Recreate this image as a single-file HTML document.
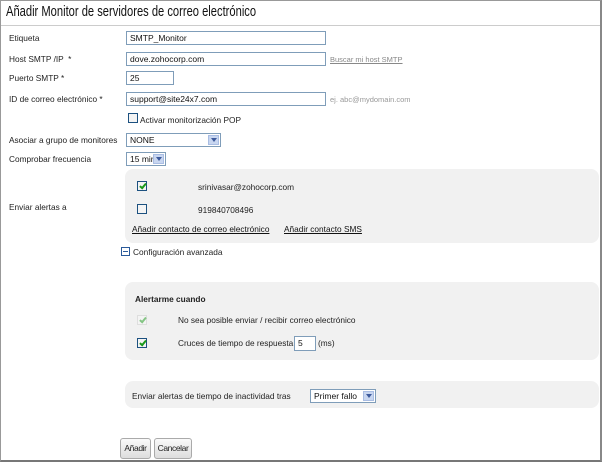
<!DOCTYPE html>
<html><head><meta charset="utf-8"><style>
*{margin:0;padding:0;box-sizing:border-box}
body{width:602px;height:462px;position:relative;background:#fff;font-family:"Liberation Sans",sans-serif;font-size:8.3px;color:#222;overflow:hidden}
.a{position:absolute;white-space:nowrap}
.frame{position:absolute;left:0;top:0;width:602px;height:462px;border-top:1px solid #999;border-left:1px solid #999;border-right:2px solid #888;border-bottom:2px solid #777}
.title{left:6px;top:4px;font-family:"Liberation Sans",sans-serif;font-size:14.5px;color:#111;transform:scaleX(.77);transform-origin:left}
.sep{left:1px;top:25px;width:599px;height:1px;background:#ccc}
.inp{position:absolute;border:1px solid #7f9db9;background:#fff;padding-left:3px;font-size:8.5px;line-height:12px;color:#111}
.sel{position:absolute;border:1px solid #7f9db9;background:#fff;padding-left:3px;font-size:8.5px;line-height:12px;color:#111}
.sel i{position:absolute;right:1px;top:1px;width:11px;height:10px;background:#c8d6f0;border:1px solid #a9bde3}
.sel i:after{content:"";position:absolute;left:2px;top:2px;border-left:3px solid transparent;border-right:3px solid transparent;border-top:4px solid #3d5a9c}
.box{position:absolute;left:125px;width:474px;background:#f1f1f1;border-radius:8px}
.cb{position:absolute;width:10px;height:10px;border:1px solid #1c5180;background:#f4f4f4}
.cb.ck:after{content:"";position:absolute;left:3px;top:0px;width:2px;height:5px;border-right:2px solid #1a9a1a;border-bottom:2px solid #1a9a1a;transform:rotate(40deg)}
.u{text-decoration:underline;color:#111}
.gray{color:#999}
.btn{position:absolute;top:438px;height:21px;border:1px solid #aaa;border-radius:3px;background:linear-gradient(#fafafa,#ddd);font-family:"Liberation Sans",sans-serif;font-size:8.5px;line-height:19px;text-align:center;letter-spacing:-.4px}
</style></head><body>
<div class="frame"></div>
<div class="a title">Añadir Monitor de servidores de correo electrónico</div>
<div class="a sep"></div>

<div class="a" style="left:9px;top:33px">Etiqueta</div>
<div class="inp" style="left:126px;top:31px;width:200px;height:14px">SMTP_Monitor</div>
<div class="a" style="left:9px;top:54px">Host SMTP /IP &nbsp;*</div>
<div class="inp" style="left:126px;top:52px;width:200px;height:14px">dove.zohocorp.com</div>
<div class="a u gray" style="left:330px;top:55px;font-size:7.5px;color:#888">Buscar mi host SMTP</div>
<div class="a" style="left:9px;top:73px">Puerto SMTP *</div>
<div class="inp" style="left:126px;top:71px;width:48px;height:14px">25</div>
<div class="a" style="left:9px;top:94px">ID de correo electrónico *</div>
<div class="inp" style="left:126px;top:92px;width:200px;height:14px">support@site24x7.com</div>
<div class="a gray" style="left:330px;top:95px;font-size:7.5px">ej. abc@mydomain.com</div>
<div class="cb" style="left:128px;top:113px"></div>
<div class="a" style="left:140px;top:115px">Activar monitorización POP</div>
<div class="a" style="left:9px;top:135px">Asociar a grupo de monitores</div>
<div class="sel" style="left:126px;top:133px;width:95px;height:14px">NONE<i></i></div>
<div class="a" style="left:9px;top:154px">Comprobar frecuencia</div>
<div class="sel" style="left:126px;top:152px;width:40px;height:14px">15 min<i></i></div>

<div class="box" style="top:169px;height:74px"></div>
<div class="cb ck" style="left:137px;top:181px"></div>
<div class="a" style="left:198px;top:182px">srinivasar@zohocorp.com</div>
<div class="cb" style="left:137px;top:204px"></div>
<div class="a" style="left:198px;top:205px">919840708496</div>
<div class="a" style="left:9px;top:202px">Enviar alertas a</div>
<div class="a u" style="left:132px;top:224px">Añadir contacto de correo electrónico</div>
<div class="a u" style="left:284px;top:224px">Añadir contacto SMS</div>

<div class="a" style="left:121px;top:247px;width:9px;height:9px;border:1px solid #2a5a9a;background:#fff"><div style="position:absolute;left:1px;top:3px;width:5px;height:1px;background:#2a5a9a"></div></div>
<div class="a" style="left:133px;top:247px">Configuración avanzada</div>

<div class="box" style="top:282px;height:78px"></div>
<div class="a" style="left:135px;top:294px;font-weight:bold">Alertarme cuando</div>
<div class="cb ck" style="left:137px;top:315px;border-color:#ccc;background:#f7f7f7;opacity:.5"></div>
<div class="a" style="left:178px;top:315px">No sea posible enviar / recibir correo electrónico</div>
<div class="cb ck" style="left:137px;top:338px"></div>
<div class="a" style="left:178px;top:338px">Cruces de tiempo de respuesta</div>
<div class="inp" style="left:294px;top:336px;width:22px;height:15px">5</div>
<div class="a" style="left:318px;top:338px">(ms)</div>

<div class="box" style="top:381px;height:27px"></div>
<div class="a" style="left:132px;top:391px">Enviar alertas de tiempo de inactividad tras</div>
<div class="sel" style="left:310px;top:389px;width:66px;height:14px">Primer fallo<i></i></div>

<div class="btn" style="left:120px;width:31px">Añadir</div>
<div class="btn" style="left:154px;width:38px">Cancelar</div>
</body></html>
